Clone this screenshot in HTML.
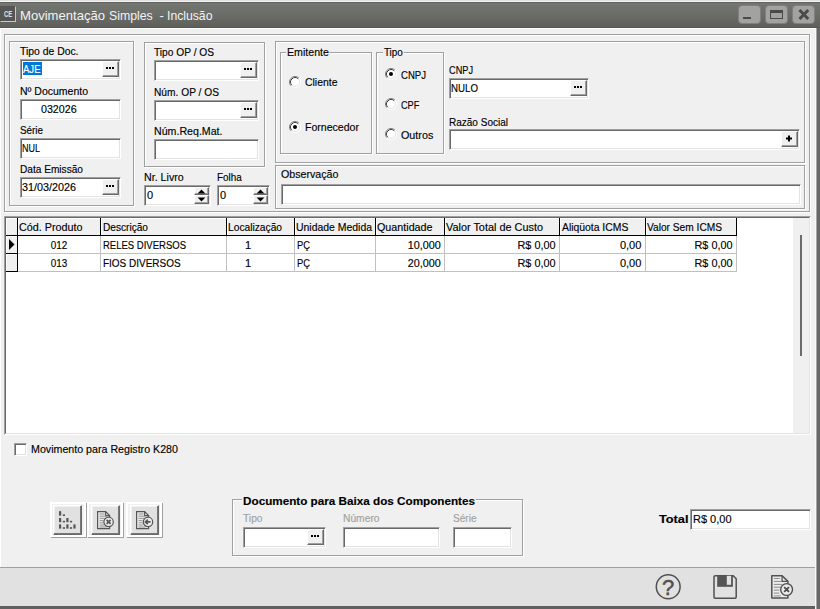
<!DOCTYPE html>
<html lang="pt-BR">
<head>
<meta charset="utf-8">
<title>Movimentação Simples - Inclusão</title>
<style>
*{box-sizing:border-box;margin:0;padding:0}
html,body{width:820px;height:609px;overflow:hidden;background:#f0f0f0}
body{position:relative;font-family:"Liberation Sans",sans-serif;font-size:11px;line-height:13px;color:#000}
.a{position:absolute}
.t{-webkit-text-stroke:0.15px currentColor;position:absolute;white-space:nowrap;line-height:13px;height:13px;transform-origin:0 50%}
.t.rt{transform-origin:100% 50%}
.t.ct{transform-origin:50% 50%}
.b{font-weight:bold}
.g{color:#a0a0a0}
/* title bar */
#top{left:0;top:0;width:820px;height:2px;background:linear-gradient(#e0e0e0 0,#e0e0e0 1px,#f4f4f4 1px)}
#tb{left:0;top:2px;width:820px;height:26px;background:linear-gradient(#626360 0,#626360 1px,#747671 1px,#6b6d68 12px,#5f605c 25px,#565753 25px)}
#ttl{-webkit-text-stroke:0;left:20px;top:7px;font-size:13px;line-height:18px;height:18px;color:#f4f4f4}
#ttl span{display:inline-block;white-space:pre;transform-origin:0 50%}
.wb{position:absolute;top:5px;width:23px;height:19px;background:#a2a2a2;border:1px solid #80817e;border-radius:4px}
/* window frame */
#fr{z-index:2;left:817px;top:28px;width:3px;height:581px;background:#686868;box-shadow:-1px 0 0 #a4a4a4,-2px 0 0 #f8f8f8}
#fb{left:0;top:606px;width:820px;height:3px;background:#606060;box-shadow:0 -1px 0 #eaeaea}
/* panels (etched) */
.p{position:absolute;border:1px solid #a0a0a0;box-shadow:inset 1px 1px 0 #fff,1px 1px 0 #fff}
/* sunken edit */
.e{position:absolute;background:#fff;border:1px solid;border-color:#a0a0a0 #fff #fff #a0a0a0;box-shadow:inset 1px 1px 0 #696969,inset -1px -1px 0 #e3e3e3}
.e .t{top:3px;left:1px}
/* small button in edit */
.sb{position:absolute;background:#f0f0f0;border:1px solid;border-color:#fff #696969 #696969 #fff;box-shadow:inset -1px -1px 0 #a0a0a0}
.sb i{position:absolute;background:#000;width:2px;height:2px;top:5px}
/* radio */
.r{position:absolute;width:12px;height:12px;border-radius:50%;background:#fff;border:1px solid;border-color:#808080 #fff #fff #808080;box-shadow:inset 1px 1px 0 #404040}
.r.on:after{content:"";position:absolute;left:3px;top:3px;width:4px;height:4px;border-radius:50%;background:#000}
/* grid */
#gridw{left:4px;top:216px;width:807px;height:219px;border:1px solid;border-color:#a0a0a0 #fff #fff #a0a0a0}
#grid{left:5px;top:217px;width:805px;height:217px;background:#fff;border:1px solid;border-color:#696969 #e3e3e3 #e3e3e3 #696969}
.h{position:absolute;top:0;height:18px;background:#f0f0f0;border-right:1px solid #000;border-bottom:1px solid #000;box-shadow:inset 1px 1px 0 #fff}
.h .t{left:1px;top:3px}
.c{position:absolute;height:18px;border-right:1px solid #c0c0c0;border-bottom:1px solid #c0c0c0;background:#fff}
.c .t{top:3px}
.c .t.l{left:2px}
.c .t.rt{right:3px}
.c .t.ct{left:0;right:0;text-align:center}
/* bottom buttons */
.ob{position:absolute;width:36px;height:35px;border:2px solid;border-color:#fff #fff #fff #fff;box-shadow:1px 1px 0 #a0a0a0;background:#f0f0f0}
.ib{position:absolute;left:2px;top:1px;width:29px;height:30px;background:#e1e1e1;border:1px solid;border-color:#fff #696969 #696969 #fff;box-shadow:inset -1px -1px 0 #777,inset 1px 1px 0 #f0f0f0}
#sbar{left:0;top:567px;width:816px;height:39px;background:#e1e1e1;border-top:1px solid #a0a0a0}
</style>
</head>
<body>
<!-- title bar -->
<div class="a" id="top"></div>
<div class="a" id="tb"></div>
<div class="a" style="left:0;top:6px;width:16px;height:16px;background:#555553;border:1px solid;border-color:#555553 #c8c8c8 #c8c8c8 #555553"></div>
<div class="t b" style="left:4px;top:8px;font-size:9.5px;line-height:11px;height:11px;color:#dcdcdc;transform:scale(0.62,1)">CE</div>
<div class="t" id="ttl"><span style="width:89.4px;transform:scale(1.006,1)">Movimentação </span><span style="width:50px;transform:scale(0.946,1)">Simples </span><span style="width:8px">- </span><span style="width:46px;transform:scale(0.938,1)">Inclusão</span></div>
<div class="wb" style="left:738px"><svg width="21" height="17" viewBox="0 0 21 17"><rect x="4" y="11" width="8" height="2" fill="#4a4a4a"/></svg></div>
<div class="wb" style="left:765px"><svg width="21" height="17" viewBox="0 0 21 17"><rect x="4.5" y="4.5" width="12" height="8" fill="none" stroke="#4a4a4a"/><rect x="4" y="4" width="13" height="3" fill="#4a4a4a"/></svg></div>
<div class="wb" style="left:792px"><svg width="21" height="17" viewBox="0 0 21 17"><path d="M6.5 4 L15.2 13 M15.2 4 L6.5 13" stroke="#4a4a4a" stroke-width="3" fill="none"/></svg></div>
<div class="a" id="fr"></div>
<div class="a" id="fb"></div>

<div class="a" style="left:0;top:28px;width:817px;height:1px;background:#fff"></div><div class="a" style="left:0;top:28px;width:1px;height:540px;background:#fff"></div>
<!-- outer top panel -->
<div class="p" style="left:4px;top:34px;width:806px;height:178px"></div>

<!-- group 1 -->
<div class="p" style="left:9px;top:41px;width:125px;height:165px"></div>
<div class="t" style="transform:scaleX(0.944);left:20px;top:45px">Tipo de Doc.</div>
<div class="e" style="left:20px;top:59px;width:101px;height:21px">
  <div class="a" style="left:2px;top:2px;width:19px;height:13px;background:#0078d7"></div>
  <div class="t" style="transform:scaleX(0.867);color:#fff;left:2px">AJE</div>
  <div class="sb" style="left:81px;top:1px;width:17px;height:16px"><i style="left:3px"></i><i style="left:6px"></i><i style="left:9px"></i></div>
</div>
<div class="t" style="transform:scaleX(0.954);left:20px;top:85px">Nº Documento</div>
<div class="e" style="left:20px;top:99px;width:101px;height:21px"><div class="t" style="transform:scaleX(0.97);left:20px">032026</div></div>
<div class="t" style="transform:scaleX(0.895);left:20px;top:124px">Série</div>
<div class="e" style="left:20px;top:138px;width:101px;height:21px"><div class="t" style="transform:scaleX(0.818);">NUL</div></div>
<div class="t" style="transform:scaleX(0.92);left:20px;top:163px">Data Emissão</div>
<div class="e" style="left:20px;top:177px;width:101px;height:21px">
  <div class="t" style="transform:scaleX(0.981);">31/03/2026</div>
  <div class="sb" style="left:81px;top:1px;width:17px;height:16px"><i style="left:3px"></i><i style="left:6px"></i><i style="left:9px"></i></div>
</div>

<!-- group 2 -->
<div class="p" style="left:144px;top:42px;width:121px;height:125px"></div>
<div class="t" style="transform:scaleX(0.926);left:154px;top:46px">Tipo OP / OS</div>
<div class="e" style="left:154px;top:60px;width:105px;height:21px">
  <div class="sb" style="left:85px;top:1px;width:17px;height:16px"><i style="left:3px"></i><i style="left:6px"></i><i style="left:9px"></i></div>
</div>
<div class="t" style="transform:scaleX(0.927);left:154px;top:86px">Núm. OP / OS</div>
<div class="e" style="left:154px;top:100px;width:105px;height:21px">
  <div class="sb" style="left:85px;top:1px;width:17px;height:16px"><i style="left:3px"></i><i style="left:6px"></i><i style="left:9px"></i></div>
</div>
<div class="t" style="transform:scaleX(0.966);left:154px;top:125px">Núm.Req.Mat.</div>
<div class="e" style="left:154px;top:139px;width:105px;height:21px"></div>

<!-- Nr livro / Folha -->
<div class="t" style="transform:scaleX(0.969);left:144px;top:171px">Nr. Livro</div>
<div class="e" style="left:144px;top:185px;width:67px;height:21px"><div class="t" style="left:2px">0</div>
  <div class="sb" style="left:49px;top:1px;width:15px;height:8px"></div><div class="sb" style="left:49px;top:9px;width:15px;height:9px"></div>
  <svg class="a" style="left:49px;top:1px" width="15" height="17" viewBox="0 0 15 17"><path d="M7.5 2.6 L11.4 6.5 H3.6 Z M7.5 14.4 L11.4 10.5 H3.6 Z" fill="#000"/></svg>
</div>
<div class="t" style="transform:scaleX(0.897);left:217px;top:171px">Folha</div>
<div class="e" style="left:217px;top:185px;width:53px;height:21px"><div class="t" style="left:2px">0</div>
  <div class="sb" style="left:35px;top:1px;width:15px;height:8px"></div><div class="sb" style="left:35px;top:9px;width:15px;height:9px"></div>
  <svg class="a" style="left:35px;top:1px" width="15" height="17" viewBox="0 0 15 17"><path d="M7.5 2.6 L11.4 6.5 H3.6 Z M7.5 14.4 L11.4 10.5 H3.6 Z" fill="#000"/></svg>
</div>

<!-- right panel -->
<div class="p" style="left:275px;top:41px;width:530px;height:122px"></div>
<!-- Emitente -->
<div class="p" style="left:280px;top:52px;width:92px;height:102px"></div>
<div class="t" style="transform:scaleX(0.967);left:286px;top:46px;background:#f0f0f0;padding:0 1px">Emitente</div>
<svg class="a" style="left:289px;top:76px" width="12" height="12" viewBox="0 0 12 12" fill="none"><circle cx="6" cy="6" r="5" fill="#fff"/><path d="M2.11 9.89 A5.5 5.5 0 0 1 9.89 2.11" stroke="#808080"/><path d="M9.89 2.11 A5.5 5.5 0 0 1 2.11 9.89" stroke="#fff"/><path d="M2.82 9.18 A4.5 4.5 0 0 1 9.18 2.82" stroke="#404040"/><path d="M9.18 2.82 A4.5 4.5 0 0 1 2.82 9.18" stroke="#e3e3e3"/></svg><div class="t" style="transform:scaleX(0.949);left:305px;top:76px">Cliente</div>
<svg class="a" style="left:289px;top:121px" width="12" height="12" viewBox="0 0 12 12" fill="none"><circle cx="6" cy="6" r="5" fill="#fff"/><path d="M2.11 9.89 A5.5 5.5 0 0 1 9.89 2.11" stroke="#808080"/><path d="M9.89 2.11 A5.5 5.5 0 0 1 2.11 9.89" stroke="#fff"/><path d="M2.82 9.18 A4.5 4.5 0 0 1 9.18 2.82" stroke="#404040"/><path d="M9.18 2.82 A4.5 4.5 0 0 1 2.82 9.18" stroke="#e3e3e3"/><circle cx="6" cy="6" r="2" fill="#000"/></svg><div class="t" style="transform:scaleX(0.96);left:305px;top:121px">Fornecedor</div>
<!-- Tipo -->
<div class="p" style="left:376px;top:52px;width:68px;height:102px"></div>
<div class="t" style="transform:scaleX(0.905);left:383px;top:46px;background:#f0f0f0;padding:0 1px">Tipo</div>
<svg class="a" style="left:385px;top:68px" width="12" height="12" viewBox="0 0 12 12" fill="none"><circle cx="6" cy="6" r="5" fill="#fff"/><path d="M2.11 9.89 A5.5 5.5 0 0 1 9.89 2.11" stroke="#808080"/><path d="M9.89 2.11 A5.5 5.5 0 0 1 2.11 9.89" stroke="#fff"/><path d="M2.82 9.18 A4.5 4.5 0 0 1 9.18 2.82" stroke="#404040"/><path d="M9.18 2.82 A4.5 4.5 0 0 1 2.82 9.18" stroke="#e3e3e3"/><circle cx="6" cy="6" r="2" fill="#000"/></svg><div class="t" style="transform:scaleX(0.87);left:401px;top:69px">CNPJ</div>
<svg class="a" style="left:385px;top:98px" width="12" height="12" viewBox="0 0 12 12" fill="none"><circle cx="6" cy="6" r="5" fill="#fff"/><path d="M2.11 9.89 A5.5 5.5 0 0 1 9.89 2.11" stroke="#808080"/><path d="M9.89 2.11 A5.5 5.5 0 0 1 2.11 9.89" stroke="#fff"/><path d="M2.82 9.18 A4.5 4.5 0 0 1 9.18 2.82" stroke="#404040"/><path d="M9.18 2.82 A4.5 4.5 0 0 1 2.82 9.18" stroke="#e3e3e3"/></svg><div class="t" style="transform:scaleX(0.832);left:401px;top:99px">CPF</div>
<svg class="a" style="left:385px;top:128px" width="12" height="12" viewBox="0 0 12 12" fill="none"><circle cx="6" cy="6" r="5" fill="#fff"/><path d="M2.11 9.89 A5.5 5.5 0 0 1 9.89 2.11" stroke="#808080"/><path d="M9.89 2.11 A5.5 5.5 0 0 1 2.11 9.89" stroke="#fff"/><path d="M2.82 9.18 A4.5 4.5 0 0 1 9.18 2.82" stroke="#404040"/><path d="M9.18 2.82 A4.5 4.5 0 0 1 2.82 9.18" stroke="#e3e3e3"/></svg><div class="t" style="transform:scaleX(0.978);left:401px;top:129px">Outros</div>
<!-- CNPJ -->
<div class="t" style="transform:scaleX(0.835);left:449px;top:64px">CNPJ</div>
<div class="e" style="left:449px;top:78px;width:140px;height:21px"><div class="t" style="transform:scaleX(0.883);top:3px">NULO</div>
  <div class="sb" style="left:120px;top:1px;width:17px;height:16px"><i style="left:3px"></i><i style="left:6px"></i><i style="left:9px"></i></div>
</div>
<div class="t" style="transform:scaleX(0.91);left:449px;top:116px">Razão Social</div>
<div class="e" style="left:449px;top:129px;width:351px;height:21px">
  <div class="sb" style="left:331px;top:1px;width:17px;height:16px"><svg class="a" style="left:0;top:0" width="14" height="13" viewBox="0 0 14 13"><path d="M7 3.5v6M4 6.5h6" stroke="#000" stroke-width="2" fill="none"/></svg></div>
</div>

<!-- Observação -->
<div class="p" style="left:275px;top:165px;width:530px;height:44px"></div>
<div class="t" style="transform:scaleX(0.969);left:281px;top:168px">Observação</div>
<div class="e" style="left:281px;top:184px;width:520px;height:21px"></div>

<!-- grid -->
<div class="a" id="gridw"></div>
<div class="a" id="grid">
  <div class="a" style="left:787px;top:0;width:16px;height:215px;background:#f0f0f0"></div>
  <div class="a" style="left:794px;top:17px;width:2px;height:121px;background:#6c6c6c"></div>
  <div class="h" style="left:0;width:12px"></div>
  <div class="h" style="left:12px;width:83px"><div class="t" style="transform:scaleX(0.98);left:1px">Cód. Produto</div></div>
  <div class="h" style="left:95px;width:126px"><div class="t" style="transform:scaleX(0.92);left:2px">Descrição</div></div>
  <div class="h" style="left:221px;width:68px"><div class="t" style="transform:scaleX(0.93);">Localização</div></div>
  <div class="h" style="left:289px;width:81px"><div class="t" style="transform:scaleX(0.949);">Unidade Medida</div></div>
  <div class="h" style="left:370px;width:69px"><div class="t" style="transform:scaleX(0.976);">Quantidade</div></div>
  <div class="h" style="left:439px;width:115px"><div class="t" style="transform:scaleX(0.989);">Valor Total de Custo</div></div>
  <div class="h" style="left:554px;width:86px"><div class="t" style="transform:scaleX(0.943);left:2px">Aliqüota ICMS</div></div>
  <div class="h" style="left:640px;width:91px"><div class="t" style="transform:scaleX(0.925);">Valor Sem ICMS</div></div>
  <!-- row 1 -->
  <div class="h" style="left:0;top:18px;height:18px;width:12px"><svg class="a" style="left:2px;top:3px" width="8" height="11" viewBox="0 0 8 11"><path d="M1 0 L6.5 5.5 L1 11 Z" fill="#000"/></svg></div>
  <div class="c" style="left:12px;top:18px;width:83px"><div class="t ct" style="transform:scaleX(0.899);">012</div></div>
  <div class="c" style="left:95px;top:18px;width:126px"><div class="t l" style="transform:scaleX(0.865);">RELES DIVERSOS</div></div>
  <div class="c" style="left:221px;top:18px;width:68px"><div class="t" style="left:18px">1</div></div>
  <div class="c" style="left:289px;top:18px;width:81px"><div class="t l" style="transform:scaleX(0.851);">PÇ</div></div>
  <div class="c" style="left:370px;top:18px;width:69px"><div class="t rt" style="transform:scaleX(0.981);">10,000</div></div>
  <div class="c" style="left:439px;top:18px;width:115px"><div class="t rt" style="transform:scaleX(0.986);">R$ 0,00</div></div>
  <div class="c" style="left:554px;top:18px;width:86px"><div class="t rt" style="transform:scaleX(1.004);;right:4px">0,00</div></div>
  <div class="c" style="left:640px;top:18px;width:91px"><div class="t rt" style="transform:scaleX(0.986);">R$ 0,00</div></div>
  <!-- row 2 -->
  <div class="h" style="left:0;top:36px;height:18px;width:12px"></div>
  <div class="c" style="left:12px;top:36px;width:83px"><div class="t ct" style="transform:scaleX(0.899);">013</div></div>
  <div class="c" style="left:95px;top:36px;width:126px"><div class="t l" style="transform:scaleX(0.906);">FIOS DIVERSOS</div></div>
  <div class="c" style="left:221px;top:36px;width:68px"><div class="t" style="left:18px">1</div></div>
  <div class="c" style="left:289px;top:36px;width:81px"><div class="t l" style="transform:scaleX(0.851);">PÇ</div></div>
  <div class="c" style="left:370px;top:36px;width:69px"><div class="t rt" style="transform:scaleX(0.981);">20,000</div></div>
  <div class="c" style="left:439px;top:36px;width:115px"><div class="t rt" style="transform:scaleX(0.986);">R$ 0,00</div></div>
  <div class="c" style="left:554px;top:36px;width:86px"><div class="t rt" style="transform:scaleX(1.004);;right:4px">0,00</div></div>
  <div class="c" style="left:640px;top:36px;width:91px"><div class="t rt" style="transform:scaleX(0.986);">R$ 0,00</div></div>
</div>

<!-- checkbox -->
<div class="e" style="left:14px;top:443px;width:13px;height:13px"></div>
<div class="t" style="transform:scaleX(0.969);left:31px;top:443px">Movimento para Registro K280</div>

<!-- bottom buttons -->
<div class="ob" style="left:50px;top:502px"><div class="ib" style="left:1px">
<svg class="a" style="left:0;top:0" width="27" height="28" viewBox="0 0 27 28" fill="#555"><rect x="5" y="5.2" width="2.2" height="4.4"/><rect x="5" y="12" width="2.2" height="4.2"/><rect x="5" y="18.4" width="2.2" height="4.2"/><rect x="8.8" y="8.4" width="2.2" height="1.6"/><rect x="8.8" y="14.8" width="2.2" height="1.6"/><rect x="8.8" y="21.2" width="2.2" height="1.6"/><rect x="12.3" y="12" width="2.2" height="4.2"/><rect x="12.3" y="18.4" width="2.2" height="4.2"/><rect x="15.9" y="14.8" width="2.2" height="1.6"/><rect x="15.9" y="21.2" width="2.2" height="1.6"/><rect x="19.4" y="18.4" width="2.2" height="4.2"/></svg>
</div></div>
<div class="ob" style="left:87px;top:502px"><div class="ib" style="left:2px">
<svg class="a" style="left:0;top:0" width="27" height="28" viewBox="0 0 27 28" fill="none" stroke="#555"><path d="M5.6 5.6 H13.6 L17.6 9.6 V22.6 H5.6 Z" fill="#ececec" stroke-width="1.2"/><path d="M13.6 5.6 V9.6 H17.6" stroke-width="1.2"/><path d="M7.5 8h5M7.5 10.2h7M7.5 12.4h6M7.5 14.6h4M7.5 16.8h4M7.5 19h4.5M7.5 21h7" stroke="#8c8c8c" stroke-width="0.9"/><circle cx="16.6" cy="15.9" r="4.7" fill="#ececec" stroke-width="1.2"/><path d="M14.6 13.9l4 4M18.6 13.9l-4 4" stroke-width="1.7"/></svg>
</div></div>
<div class="ob" style="left:126px;top:502px"><div class="ib" style="left:2px">
<svg class="a" style="left:0;top:0" width="27" height="28" viewBox="0 0 27 28" fill="none" stroke="#555"><path d="M5.6 5.6 H13.6 L17.6 9.6 V22.6 H5.6 Z" fill="#ececec" stroke-width="1.2"/><path d="M13.6 5.6 V9.6 H17.6" stroke-width="1.2"/><path d="M7.5 8h5M7.5 10.2h7M7.5 12.4h6M7.5 14.6h4M7.5 16.8h4M7.5 19h4.5M7.5 21h7" stroke="#8c8c8c" stroke-width="0.9"/><circle cx="17" cy="15.9" r="4.7" fill="#ececec" stroke-width="1.2"/><path d="M14.6 15.9h5M16.8 13.6l-2.4 2.3l2.4 2.3" stroke-width="1.7"/></svg>
</div></div>

<!-- Documento para Baixa -->
<div class="p" style="left:232px;top:499px;width:291px;height:57px"></div>
<div class="t b" style="transform:scaleX(1.063);left:242px;top:495px;background:#f0f0f0;padding:0 1px">Documento para Baixa dos Componentes</div>
<div class="t g" style="transform:scaleX(0.929);left:243px;top:512px">Tipo</div>
<div class="e" style="left:243px;top:527px;width:83px;height:21px">
  <div class="sb" style="left:63px;top:1px;width:17px;height:16px"><i style="left:3px"></i><i style="left:6px"></i><i style="left:9px"></i></div>
</div>
<div class="t g" style="transform:scaleX(0.933);left:343px;top:512px">Número</div>
<div class="e" style="left:343px;top:527px;width:97px;height:21px"></div>
<div class="t g" style="transform:scaleX(0.915);left:453px;top:512px">Série</div>
<div class="e" style="left:453px;top:527px;width:59px;height:21px"></div>

<!-- Total -->
<div class="t b" style="transform:scaleX(1.158);left:659px;top:513px">Total</div>
<div class="e" style="left:690px;top:509px;width:121px;height:21px"><div class="t" style="transform:scaleX(0.999);left:2px">R$ 0,00</div></div>

<!-- status bar -->
<div class="a" id="sbar">
<svg class="a" style="left:654px;top:5px" width="28" height="28" viewBox="0 0 28 28" fill="none" stroke="#505050"><circle cx="14.2" cy="13.75" r="11.9" stroke-width="1.5"/><text x="14.2" y="21.7" text-anchor="middle" font-family="Liberation Sans, sans-serif" font-size="22" fill="#505050" stroke="#505050" stroke-width="0.5">?</text></svg>
<svg class="a" style="left:712px;top:6px" width="27" height="27" viewBox="0 0 27 27" fill="none" stroke="#505050"><path d="M3.2 1.8 H21.2 L24.2 4.8 V23 Q24.2 24.2 23 24.2 H3.2 Q2 24.2 2 23 V3 Q2 1.8 3.2 1.8 Z" stroke-width="1.5"/><rect x="5.2" y="1.8" width="15.7" height="11" fill="#555" stroke="none"/><rect x="14.8" y="1.8" width="4.3" height="9" fill="#e1e1e1" stroke="none"/></svg>
<svg class="a" style="left:770px;top:6px" width="26" height="27" viewBox="0 0 26 27" fill="none" stroke="#505050"><path d="M1.8 1.7 H12.1 L17.9 7.4 V23.9 H1.8 Z" fill="#ececec" stroke-width="1.5" stroke-linejoin="round"/><path d="M12.1 1.7 V7.4 H17.9" stroke-width="1.3"/><path d="M3.8 4.5h6M3.8 7.4h8M3.8 10.4h8M3.8 13.2h6.5M3.8 16.1h5.5M3.8 19.1h5.5M3.8 21.9h7" stroke="#8a8a8a" stroke-width="1"/><circle cx="16.6" cy="15.5" r="5.9" fill="#ececec" stroke-width="1.4"/><path d="M14.2 13.1l4.8 4.8M19 13.1l-4.8 4.8" stroke-width="2"/></svg>
</div>
</body>
</html>
